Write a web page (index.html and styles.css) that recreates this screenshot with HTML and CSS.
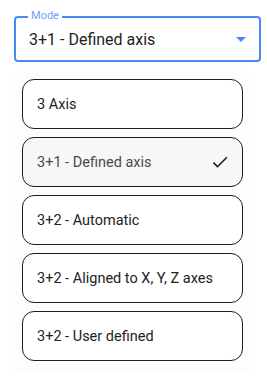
FILE: index.html
```html
<!DOCTYPE html>
<html>
<head>
<meta charset="utf-8">
<link rel="stylesheet" href="styles.css">
</head>
<body>
<div class="field">
  <span class="label">Mode</span>
  <span class="value">3+1 - Defined axis</span>
  <span class="arrow"></span>
</div>
<div class="menu">
  <div class="opt">3 Axis</div>
  <div class="opt sel">3+1 - Defined axis
    <svg class="check" width="20" height="20" viewBox="0 0 24 24"><path d="M9 16.17L4.83 12l-1.42 1.41L9 19 21 7l-1.41-1.41z" fill="#222"/></svg>
  </div>
  <div class="opt">3+2 - Automatic</div>
  <div class="opt">3+2 - Aligned to X, Y, Z axes</div>
  <div class="opt">3+2 - User defined</div>
</div>
</body>
</html>
```
FILE: styles.css
```css
html, body { margin: 0; padding: 0; background: #fff; }
body { font-family: Roboto, "Liberation Sans", sans-serif; color: #1f1f1f; }
.field {
  position: relative;
  margin: 16px 0 0 14px;
  width: 247px;
  height: 46px;
  box-sizing: border-box;
  border: 2px solid #4689f7;
  border-radius: 4px;
  display: flex;
  align-items: center;
  padding-left: 13px;
}
.label {
  position: absolute;
  left: 12px;
  top: -9px;
  padding: 0 3px;
  background: #fff;
  color: #6da0f8;
  font-size: 11px;
  line-height: 14px;
}
.value { font-size: 16px; color: #1e1e1e; flex: 1; }
.arrow {
  width: 0; height: 0;
  border-left: 5px solid transparent;
  border-right: 5px solid transparent;
  border-top: 5px solid #4689f7;
  margin-right: 13px;
  margin-top: 1px;
}
.menu {
  margin: 8px 0 0 14px;
  width: 236px;
  box-sizing: border-box;
  background: #fdfdfd;
  padding: 9px 7px 11px 8px;
  display: flex;
  flex-direction: column;
  gap: 8px;
}
.opt {
  height: 50px;
  box-sizing: border-box;
  border: 1px solid #1c1c22;
  border-radius: 12px;
  background: #fff;
  display: flex;
  align-items: center;
  padding-left: 14px;
  padding-right: 14px;
  font-size: 14.5px;
  color: #222;
}
.opt.sel { background: #f7f7f7; color: #4a4a4a; justify-content: space-between; }
.check { margin-right: -2px; }
```
